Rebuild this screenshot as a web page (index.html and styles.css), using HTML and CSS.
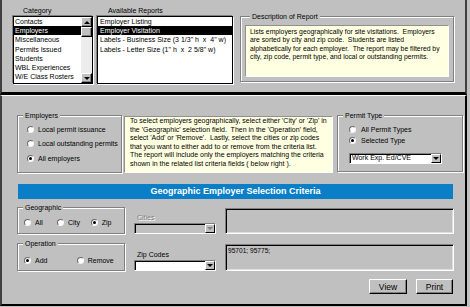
FILE: index.html
```html
<!DOCTYPE html>
<html>
<head>
<meta charset="utf-8">
<link rel="stylesheet" href="styles.css">
</head>
<body>
<div class="window">
  <div class="top">
    <div class="col col-cat">
      <div class="col-label">Category</div>
      <div class="list list-cat">
        <ul class="items">
          <li>Contacts</li>
          <li class="sel">Employers</li>
          <li>Miscellaneous</li>
          <li>Permits Issued</li>
          <li>Students</li>
          <li>WBL Experiences</li>
          <li>W/E Class Rosters</li>
        </ul>
        <div class="vscroll">
          <div class="sbtn"><span class="tri-up"></span></div>
          <div class="thumb"></div>
          <div class="track"></div>
          <div class="sbtn"><span class="tri-down"></span></div>
        </div>
      </div>
    </div>
    <div class="col col-rep">
      <div class="col-label">Available Reports</div>
      <div class="list list-rep">
        <ul class="items">
          <li>Employer Listing</li>
          <li class="sel">Employer Visitation</li>
          <li>Labels - Business Size (3 1/3" h&nbsp; x&nbsp; 4" w)</li>
          <li>Labels - Letter Size (1" h&nbsp; x&nbsp; 2 5/8" w)</li>
        </ul>
      </div>
    </div>
    <fieldset class="group desc">
      <legend>Description of Report</legend>
      <div class="note desc-note">Lists employers geographically for site visitations.&nbsp; Employers<br>are sorted by city and zip code.&nbsp; Students are listed<br>alphabetically for each employer.&nbsp; The report may be filtered by<br>city, zip code, permit type, and local or outstanding permits.</div>
    </fieldset>
  </div>

  <div class="bottom">
    <div class="row1">
      <fieldset class="group emp">
        <legend>Employers</legend>
        <div class="opt"><span class="radio"></span>Local permit issuance</div>
        <div class="opt"><span class="radio"></span>Local outstanding permits</div>
        <div class="opt"><span class="radio on"></span>All employers</div>
      </fieldset>
      <div class="note instr">To select employers geographically, select either 'City' or 'Zip' in<br>the 'Geographic' selection field.&nbsp; Then in the 'Operation' field,<br>select 'Add' or 'Remove'.&nbsp; Lastly, select the cities or zip codes<br>that you want to either add to or remove from the criteria list.<br>The report will include only the employers matching the criteria<br>shown in the related list criteria fields ( below right ).</div>
      <fieldset class="group permit">
        <legend>Permit Type</legend>
        <div class="opt"><span class="radio"></span>All Permit Types</div>
        <div class="opt"><span class="radio on"></span>Selected Type</div>
        <div class="combo permit-combo">
          <div class="combo-text">Work Exp. Ed/CVE</div>
          <div class="combo-btn"><span class="tri-down"></span></div>
        </div>
      </fieldset>
    </div>

    <div class="banner">Geographic Employer Selection Criteria</div>

    <div class="crit">
      <fieldset class="group geo">
        <legend>Geographic</legend>
        <div class="opt-row">
          <div class="opt w1"><span class="radio"></span>All</div>
          <div class="opt w2"><span class="radio"></span>City</div>
          <div class="opt"><span class="radio on"></span>Zip</div>
        </div>
      </fieldset>
      <div class="field">
        <div class="field-label disabled">Cities</div>
        <div class="combo disabled">
          <div class="combo-text"></div>
          <div class="combo-btn"><span class="tri-down"></span></div>
        </div>
      </div>
      <div class="crit-list list-cities"></div>

      <fieldset class="group oper">
        <legend>Operation</legend>
        <div class="opt-row">
          <div class="opt w3"><span class="radio on"></span>Add</div>
          <div class="opt"><span class="radio"></span>Remove</div>
        </div>
      </fieldset>
      <div class="field">
        <div class="field-label">Zip Codes</div>
        <div class="combo">
          <div class="combo-text"></div>
          <div class="combo-btn"><span class="tri-down"></span></div>
        </div>
      </div>
      <div class="crit-list list-zip">95701; 95775;</div>
    </div>

    <div class="actions">
      <div class="btn btn-view">View</div>
      <div class="btn btn-print">Print</div>
    </div>
  </div>
</div>
</body>
</html>
```
FILE: styles.css
```css
* { box-sizing: border-box; }
html, body { margin: 0; padding: 0; }
body {
  width: 470px;
  height: 307px;
  overflow: hidden;
  background: #c0c0c0;
  font-family: "Liberation Sans", Arial, sans-serif;
  font-size: 7px;
  color: #000;
}
.window { width: 467px; }

/* ---------- top panel ---------- */
.top {
  height: 95px;
  display: flex;
  align-items: flex-start;
  padding: 6px 0 0 11px;
  border-left: 2px solid #404040;
  border-right: 2px solid #404040;
  border-bottom: 3px solid #000;
}
.col { flex: none; display: flex; flex-direction: column; }
.col-cat { width: 80px; }
.col-rep { width: 136px; margin-left: 4px; }
.col-label { height: 10px; line-height: 10px; white-space: nowrap; }
.col-cat .col-label { padding-left: 10px; }
.col-rep .col-label { padding-left: 11px; }

.list {
  height: 68px;
  background: #fff;
  border: 1px solid #000;
  box-shadow: -1px -1px 0 #808080, 1px 1px 0 #fff;
  display: flex;
  overflow: hidden;
}
.items { flex: 1; min-width: 0; list-style: none; margin: 0; padding: 0; }
.items li {
  height: 9.2px;
  line-height: 9.2px;
  padding-left: 1px;
  white-space: nowrap;
  overflow: hidden;
}
.list-rep .items li { padding-left: 2px; }
.items li.sel { background: #000; color: #fff; }

.vscroll {
  width: 11px;
  flex: none;
  display: flex;
  flex-direction: column;
  background: #ececec;
}
.sbtn, .thumb {
  height: 10px;
  flex: none;
  background: #c0c0c0;
  border: 1px solid;
  border-color: #fff #000 #000 #fff;
  box-shadow: inset -1px -1px 0 #808080;
  display: flex;
  align-items: center;
  justify-content: center;
}
.track { flex: 1; }
.tri-up {
  width: 0; height: 0;
  border-left: 3px solid transparent;
  border-right: 3px solid transparent;
  border-bottom: 3px solid #000;
}
.tri-down {
  width: 0; height: 0;
  border-left: 3px solid transparent;
  border-right: 3px solid transparent;
  border-top: 3px solid #000;
}

/* ---------- group boxes ---------- */
.group {
  flex: none;
  margin: 0;
  padding: 0 0 0 5px;
  min-width: 0;
  border: 1px solid #808080;
  box-shadow: inset 1px 1px 0 #fff, 1px 1px 0 #fff;
}
.group legend {
  margin: 0;
  padding: 0 2px;
  height: 9px;
  line-height: 9px;
  background: #c0c0c0;
  white-space: nowrap;
}

.desc {
  width: 214px;
  height: 70px;
  margin: 6px 0 0 7px;
  padding: 4px 4px 4px 4px;
}
.desc legend { margin-left: 5px; }

.note {
  background: #ffffe1;
  border: 1px solid;
  border-color: #909090 #fff #fff #909090;
  white-space: nowrap;
  overflow: hidden;
}
.desc-note { height: 52px; padding: 2px 0 0 4px; line-height: 8.4px; font-size: 6.8px; }

/* ---------- bottom panel ---------- */
.bottom {
  height: 211px;
  border-top: 1px solid #fffff0;
  border-left: 2px solid #404040;
  border-right: 2px solid #000;
  border-bottom: 2px solid #000;
  padding: 15px 2px 0 15px;
}
.row1 { display: flex; align-items: flex-start; height: 62px; }

.opt { display: flex; align-items: center; gap: 4px; white-space: nowrap; }
.radio {
  flex: none;
  width: 7px;
  height: 7px;
  border-radius: 50%;
  background: #fff;
  border: 1px solid;
  border-color: #6a6a6a #f4f4f4 #f4f4f4 #6a6a6a;
  display: flex;
  align-items: center;
  justify-content: center;
}
.radio.on::after {
  content: "";
  width: 3px;
  height: 3px;
  border-radius: 50%;
  background: #000;
}

.emp { width: 105px; height: 62px; padding-top: 2px; }
.emp .opt { height: 14.5px; margin-left: 4px; }

.instr {
  flex: none;
  width: 209px;
  height: 57px;
  margin: 5px 0 0 2px;
  padding: 0 0 0 5px;
  line-height: 8.5px;
}

.permit { width: 126px; height: 61px; margin-left: 4px; padding-top: 4px; }
.permit .opt { height: 10.7px; margin-left: 6px; gap: 5px; }
.permit-combo { width: 93px; height: 10px; margin: 8px 0 0 6px; }

.combo {
  display: flex;
  height: 11px;
  background: #fff;
  border: 1px solid;
  border-color: #808080 #fff #fff #808080;
  box-shadow: inset 1px 1px 0 #000;
}
.combo-text {
  flex: 1;
  min-width: 0;
  padding-left: 2px;
  line-height: 8px;
  white-space: nowrap;
  overflow: hidden;
}
.combo-btn {
  flex: none;
  width: 10px;
  background: #c0c0c0;
  border: 1px solid;
  border-color: #fff #000 #000 #fff;
  display: flex;
  align-items: center;
  justify-content: center;
}
.combo.disabled { background: #c0c0c0; }
.combo.disabled .tri-down { border-top-color: #808080; }

.banner {
  margin: 11px 0 0 1px;
  width: 435px;
  height: 15px;
  background: #0a7fc7;
  color: #fff;
  font-weight: bold;
  font-size: 9px;
  line-height: 15px;
  text-align: center;
  white-space: nowrap;
}

.crit {
  display: grid;
  grid-template-columns: 108px 82px 229px;
  grid-template-rows: 31px 32px;
  column-gap: 9px;
  row-gap: 5px;
  margin-top: 4px;
}
.geo { height: 31px; padding-top: 5px; }
.oper { height: 32px; padding-top: 7px; }
.opt-row { display: flex; margin-left: 1px; }
.opt-row .opt { height: 10px; }
.w1 { width: 33px; }
.w2 { width: 33.7px; }
.w3 { width: 52.7px; }

.field { display: flex; flex-direction: column; justify-content: flex-end; }
.field-label { line-height: 9px; padding-left: 3px; margin-bottom: 1px; white-space: nowrap; }
.field-label.disabled { color: #808080; text-shadow: 1px 1px 0 #fff; }

.crit-list {
  align-self: end;
  background: #c0c0c0;
  border: 1px solid;
  border-color: #808080 #fff #fff #808080;
  box-shadow: inset 1px 1px 0 #000, inset -1px -1px 0 #dfdfdf;
}
.list-cities { height: 26px; }
.list-zip {
  height: 27px;
  padding: 1px 0 0 2px;
  line-height: 9px;
  font-size: 6.6px;
  white-space: nowrap;
}

.actions {
  display: flex;
  justify-content: flex-end;
  gap: 9px;
  margin-top: 8px;
  padding-right: 10px;
}
.btn {
  width: 38px;
  height: 15px;
  background: #c0c0c0;
  border: 1px solid;
  border-color: #fff #000 #000 #fff;
  box-shadow: inset -1px -1px 0 #808080;
  font-size: 8.5px;
  display: flex;
  align-items: center;
  justify-content: center;
}
.btn-print { width: 37px; }
```
